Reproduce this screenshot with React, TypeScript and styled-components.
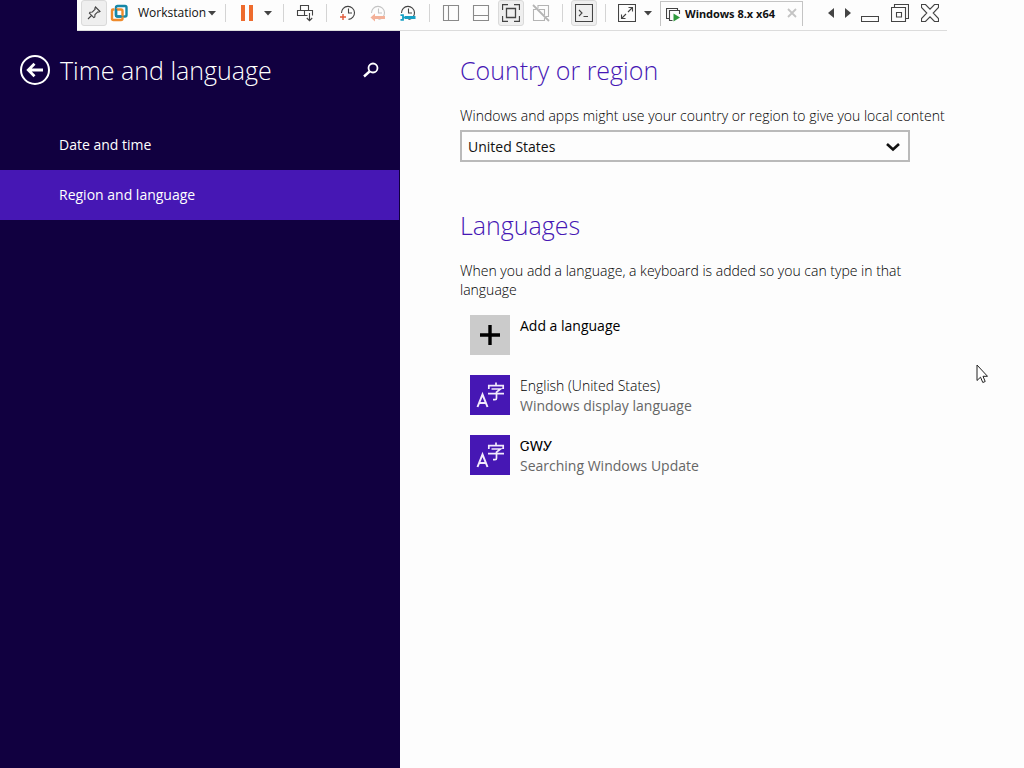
import React from "react";
import styled, { createGlobalStyle } from "styled-components";

const GlobalStyle = createGlobalStyle`
  * { box-sizing: border-box; }
  body {
    margin: 0;
    background: #fdfdfd;
    font-family: "Open Sans", "Noto Sans", "Noto Sans CJK SC", sans-serif;
    font-size: 14px;
    line-height: 20px;
    color: #111;
  }
  button { font: inherit; color: inherit; background: none; border: 0; padding: 0; }
  h1, h2, p, ul { margin: 0; padding: 0; }
  ul { list-style: none; }
`;

const Screen = styled.div`
  position: relative;
  display: flex;
  min-height: 100vh;
`;

const BarHolder = styled.header`
  position: absolute;
  top: 0;
  left: 0;
  right: 0;
  display: flex;
  justify-content: center;
`;

const Bar = styled.div`
  display: flex;
  align-items: center;
  height: 31px;
  padding: 0 4px 4px;
  background: #fdfdfd;
  border: solid #dcdcdc;
  border-width: 0 0 1px;
`;

const ToolButton = styled.button<{ $pressed?: boolean }>`
  display: flex;
  align-items: center;
  justify-content: center;
  width: 26px;
  height: 26px;
  border: 1px solid ${(p) => (p.$pressed ? "#dadada" : "transparent")};
  border-radius: 3px;
  background: ${(p) => (p.$pressed ? "#efefef" : "transparent")};
`;

const Group = styled.div`
  display: flex;
  gap: 4px;
`;

const MenuButton = styled.button`
  display: flex;
  align-items: center;
  width: 110px;
  height: 26px;
  padding: 0 1px 0 3px;
  font-size: 12px;
  white-space: nowrap;
`;

const MenuText = styled.span`
  flex: 1;
  padding-left: 10px;
  text-align: left;
`;

const CaretButton = styled.button`
  display: flex;
  align-items: center;
  justify-content: center;
  width: 15px;
  height: 26px;
`;

const Separator = styled.span`
  width: 1px;
  height: 18px;
  margin: 0 8px;
  background: #d4d4d4;
`;

const Tab = styled.div`
  display: flex;
  align-items: center;
  align-self: flex-end;
  width: 143px;
  height: 25px;
  margin: 0 20px 0 5px;
  padding: 0 5px;
  border: 1px solid #c4c4c4;
  border-bottom: 0;
  font-family: "Noto Sans", sans-serif;
  font-size: 11px;
  font-weight: 700;
  white-space: nowrap;
`;

const TabName = styled.span`
  flex: 1;
  padding-left: 4px;
`;

const Arrows = styled.div`
  display: flex;
  gap: 2px;
  margin-right: 2px;
`;

const Sidebar = styled.nav`
  flex: 0 0 400px;
  padding-top: 50px;
  background: #110040;
  color: #fff;
`;

const SidebarHead = styled.div`
  display: flex;
  align-items: center;
  height: 40px;
  padding: 0 21px 0 20px;
  margin-bottom: 30px;
`;

const BackButton = styled.button`
  display: flex;
  width: 30px;
  height: 30px;
`;

const PageTitle = styled.h1`
  flex: 1;
  padding-left: 10px;
  font-size: 25px;
  line-height: 40px;
  font-weight: 300;
`;

const SearchButton = styled.button`
  display: flex;
`;

const NavLink = styled.a<{ $active?: boolean }>`
  display: block;
  height: 50px;
  margin-right: 1px;
  padding-left: 59px;
  line-height: 50px;
  color: #fff;
  text-decoration: none;
  background: ${(p) => (p.$active ? "#4617b4" : "transparent")};
`;

const Content = styled.main`
  flex: 1;
  min-width: 0;
  padding: 50px 60px;
`;

const Section = styled.section`
  margin-bottom: 43px;
`;

const Heading = styled.h2`
  margin-bottom: 16px;
  font-size: 25px;
  line-height: 40px;
  font-weight: 300;
  color: #4617b4;
`;

const FieldLabel = styled.label`
  display: block;
  margin-bottom: 4px;
  font-weight: 330;
  color: #000;
  white-space: nowrap;
`;

const SelectBox = styled.div`
  display: grid;
  max-width: 450px;
  align-items: center;

  > * { grid-area: 1 / 1; }
  > svg { justify-self: end; margin: 2px 9px 0 0; pointer-events: none; }
`;

const Select = styled.select`
  appearance: none;
  height: 32px;
  padding: 2px 6px 0;
  border: 2px solid #bababa;
  border-radius: 0;
  background: #fdfdfd;
  font: inherit;
  color: inherit;
`;

const Note = styled.p`
  max-width: 450px;
  margin-bottom: 16px;
  line-height: 19px;
  font-weight: 330;
  color: #000;
`;

const LanguageList = styled.ul`
  display: grid;
  gap: 20px;
  padding-left: 10px;
`;

const LanguageButton = styled.button`
  display: flex;
  gap: 10px;
  height: 40px;
  text-align: left;
`;

const Tile = styled.span<{ $accent?: boolean }>`
  display: flex;
  width: 40px;
  height: 40px;
  background: ${(p) => (p.$accent ? "#4617b4" : "#cbcbcb")};
`;

const LanguageText = styled.span`
  padding-top: 1px;
`;

const LanguageName = styled.span<{ $light?: boolean }>`
  display: block;
  font-weight: ${(p) => (p.$light ? 330 : 400)};
  color: #000;
`;

const LanguageStatus = styled.span`
  display: block;
  color: #666;
`;

const Pointer = styled.svg`
  position: absolute;
  left: 976px;
  top: 364px;
`;

const Icon = ({ children, size = 18, color = "#444" }: { children: React.ReactNode; size?: number; color?: string }) => (
  <svg width={size} height={size} viewBox={`0 0 ${size} ${size}`} fill="none" stroke={color} strokeWidth="1.1" aria-hidden="true">
    {children}
  </svg>
);

const Caret = () => (
  <svg width="8" height="5" viewBox="0 0 8 5" aria-hidden="true"><path d="M0 0H8L4 4.5Z" fill="#444" /></svg>
);

const Clock = ({ color = "#444" }: { color?: string }) => (
  <>
    <path d="M2.5 9A6.5 6.5 0 1 1 9.5 15.4" stroke={color} />
    <path d="M9.5 4.5V9H13" stroke={color} />
  </>
);

const LanguageTile = () => (
  <Tile $accent>
    <svg width="40" height="40" viewBox="0 0 40 40" fill="none" stroke="#f2eafc" strokeWidth="2" aria-hidden="true">
      <path d="M7.5 32L12.5 19.5L17.5 32M9.2 28H15.8" />
      <path d="M26 7.5V10.5M18.8 14V10.7H33.2V14M21.5 14H30.5L26.5 17.2V23.2Q26.5 24.6 25 24.6H23M18 18.6H34" strokeWidth="1.7" />
    </svg>
  </Tile>
);

const Toolbar = () => (
  <BarHolder>
    <Bar>
      <ToolButton $pressed aria-label="Pin">
        <Icon><path d="M10.5 3L15 7.5L13.8 8.2L12.8 7.8L10 10.6L9.8 13L8.8 13.6L4.4 9.2L5 8.2L7.4 8L10.2 5.2L9.8 4.2ZM6.5 11.5L3 15" /></Icon>
      </ToolButton>
      <MenuButton>
        <svg width="18" height="18" viewBox="0 0 18 18" fill="none" strokeWidth="2.4" aria-hidden="true">
          <rect x="6" y="2" width="10.5" height="10.5" rx="1.5" stroke="#1688a8" />
          <path d="M4.5 5.5H3Q2 5.5 2 6.5V14.5Q2 16 3.5 16H11Q12.5 16 12.5 14.5V13" stroke="#ef8b2c" />
          <path d="M12.5 12.5V7Q12.5 5.5 11 5.5H6" stroke="#ef8b2c" />
          <path d="M6 5V11Q6 12.5 7.5 12.5H11.5" stroke="#1688a8" />
        </svg>
        <MenuText>Workstation</MenuText>
        <Caret />
      </MenuButton>
      <Separator />
      <ToolButton aria-label="Suspend">
        <svg width="12" height="16" viewBox="0 0 12 16" fill="#ee6b2d" aria-hidden="true"><path d="M0 0H4V16H0ZM8 0H12V16H8Z" /></svg>
      </ToolButton>
      <CaretButton aria-label="Power options"><Caret /></CaretButton>
      <Separator />
      <ToolButton aria-label="Send keys">
        <Icon><path d="M4.5 6.5V1.5H12.5V6.5M11.5 11.5H1.5V6.5H16.5V11.5M8.5 6.5V11.5M13.5 9V16.5M10.8 14L13.5 16.7L16.2 14" /></Icon>
      </ToolButton>
      <Separator />
      <Group>
        <ToolButton aria-label="Take snapshot">
          <Icon><Clock /><path d="M1 13H7M4 10V16" stroke="#e05a3a" strokeWidth="1.4" /></Icon>
        </ToolButton>
        <ToolButton aria-label="Revert snapshot">
          <Icon><Clock color="#c4c4c4" /><path d="M4 13.5H16" stroke="#f3b199" strokeWidth="3" /><path d="M6 9.5L1.5 13.5L6 17.5Z" fill="#f3b199" stroke="none" /></Icon>
        </ToolButton>
        <ToolButton aria-label="Manage snapshots">
          <Icon><Clock /><path d="M6 13.5H16.5" stroke="#18a0c4" strokeWidth="3" /><path d="M1.5 11.2H4V15.8H1.5M4 13.5H7" stroke="#18a0c4" strokeWidth="1.8" /></Icon>
        </ToolButton>
      </Group>
      <Separator />
      <Group>
        <ToolButton aria-label="Library">
          <Icon color="#8a8a8a"><path d="M1.5 1.5H16.5V16.5H1.5ZM6.5 1.5V16.5" /></Icon>
        </ToolButton>
        <ToolButton aria-label="Thumbnails">
          <Icon color="#8a8a8a"><path d="M1.5 1.5H16.5V16.5H1.5ZM1.5 11.5H16.5" /></Icon>
        </ToolButton>
        <ToolButton $pressed aria-label="Full screen">
          <Icon><path d="M4.5 4.5H13.5V13.5H4.5ZM.5 6V.5H6M12 .5H17.5V6M17.5 12V17.5H12M6 17.5H.5V12" strokeWidth="1.3" /></Icon>
        </ToolButton>
        <ToolButton aria-label="Unity">
          <Icon color="#b4b4b4"><path d="M6 4.5V1.5H16.5V12.5H14M4 5.5H1.5V16.5H12.5V14M7 5.5H12.5V11" /><path d="M1 1L17 17" strokeWidth="1.8" /></Icon>
        </ToolButton>
      </Group>
      <Separator />
      <ToolButton $pressed aria-label="Console">
        <Icon><path d="M.5 .5H17.5V17.5H.5ZM4 6L7 9L4 12M8.5 12.5H13" /></Icon>
      </ToolButton>
      <Separator />
      <ToolButton aria-label="Stretch">
        <Icon><path d="M.5 .5H17.5V17.5H.5ZM10.5 3.5H14.5V7.5M14.5 3.5L10 8M7.5 14.5H3.5V10.5M3.5 14.5L8 10" /></Icon>
      </ToolButton>
      <CaretButton aria-label="Stretch options"><Caret /></CaretButton>
      <Tab>
        <Icon size={15}><path d="M3.5 11.5H.5V1.5H11.5V3.5M6.5 13.5H3.5V3.5H13.5V7" /><path d="M7.5 6.5L14 10.5L7.5 14.5Z" fill="#2f9a3d" stroke="none" /></Icon>
        <TabName>Windows 8.x x64</TabName>
        <button aria-label="Close tab">
          <Icon size={10} color="#c4c4c4"><path d="M1 1L9 9M9 1L1 9" strokeWidth="1.8" /></Icon>
        </button>
      </Tab>
      <Arrows>
        <CaretButton aria-label="Previous tab"><svg width="6" height="10" viewBox="0 0 6 10" aria-hidden="true"><path d="M6 0V10L0 5Z" fill="#444" /></svg></CaretButton>
        <CaretButton aria-label="Next tab"><svg width="6" height="10" viewBox="0 0 6 10" aria-hidden="true"><path d="M0 0V10L6 5Z" fill="#444" /></svg></CaretButton>
      </Arrows>
      <Group>
        <ToolButton aria-label="Minimize"><Icon><path d="M.5 12.5H17.5V17.5H.5Z" /></Icon></ToolButton>
        <ToolButton aria-label="Restore"><Icon><path d="M.5 3.5H14.5V17.5H.5ZM3.5 3.5V.5H17.5V14.5H14.5M5.5 8.5H10.5V13H5.5Z" /></Icon></ToolButton>
        <ToolButton aria-label="Close"><Icon><path d="M.5 .5H4.5L9 5.2L13.5 .5H17.5V3.5L12.2 9L17.5 14.5V17.5H13.5L9 12.8L4.5 17.5H.5V14.5L5.8 9L.5 3.5Z" /></Icon></ToolButton>
      </Group>
    </Bar>
  </BarHolder>
);

export default function App() {
  return (
    <>
      <GlobalStyle />
      <Screen>
        <Sidebar>
          <SidebarHead>
            <BackButton aria-label="Back">
              <svg width="30" height="30" viewBox="0 0 30 30" fill="none" stroke="#fff" aria-hidden="true">
                <circle cx="15" cy="15" r="14" strokeWidth="2" />
                <path d="M8.5 15H23M14.5 8.8L8.3 15L14.5 21.2" strokeWidth="2.8" />
              </svg>
            </BackButton>
            <PageTitle>Time and language</PageTitle>
            <SearchButton aria-label="Search">
              <svg width="16" height="16" viewBox="0 0 16 16" fill="none" stroke="#fff" aria-hidden="true">
                <circle cx="10" cy="6" r="4.5" strokeWidth="1.8" />
                <path d="M6.5 9.5L1 14.5" strokeWidth="2.4" />
              </svg>
            </SearchButton>
          </SidebarHead>
          <NavLink href="#date">Date and time</NavLink>
          <NavLink href="#region" $active aria-current="page">Region and language</NavLink>
        </Sidebar>
        <Content>
          <Section>
            <Heading>Country or region</Heading>
            <FieldLabel htmlFor="country">Windows and apps might use your country or region to give you local content</FieldLabel>
            <SelectBox>
              <Select id="country" defaultValue="us"><option value="us">United States</option></Select>
              <svg width="16" height="10" viewBox="0 0 16 10" fill="none" stroke="#111" strokeWidth="2.6" aria-hidden="true"><path d="M2 2L8 7.5L14 2" /></svg>
            </SelectBox>
          </Section>
          <Section>
            <Heading>Languages</Heading>
            <Note>When you add a language, a keyboard is added so you can type in that language</Note>
            <LanguageList>
              <li>
                <LanguageButton>
                  <Tile>
                    <svg width="40" height="40" viewBox="0 0 40 40" stroke="#000" strokeWidth="3.4" aria-hidden="true"><path d="M10 20H30M20 10V30" /></svg>
                  </Tile>
                  <LanguageText>
                    <LanguageName>Add a language</LanguageName>
                  </LanguageText>
                </LanguageButton>
              </li>
              <li>
                <LanguageButton>
                  <LanguageTile />
                  <LanguageText>
                    <LanguageName $light>English (United States)</LanguageName>
                    <LanguageStatus>Windows display language</LanguageStatus>
                  </LanguageText>
                </LanguageButton>
              </li>
              <li>
                <LanguageButton>
                  <LanguageTile />
                  <LanguageText>
                    <LanguageName $light lang="chr">ᏣᎳᎩ</LanguageName>
                    <LanguageStatus>Searching Windows Update</LanguageStatus>
                  </LanguageText>
                </LanguageButton>
              </li>
            </LanguageList>
          </Section>
        </Content>
        <Pointer width="12" height="20" viewBox="0 0 12 20" aria-hidden="true">
          <path d="M1 1V16.5L4.5 13.2L6.8 18.5L9.2 17.5L7 12.3H11.5Z" fill="#fff" stroke="#222" />
        </Pointer>
      </Screen>
      <Toolbar />
    </>
  );
}
